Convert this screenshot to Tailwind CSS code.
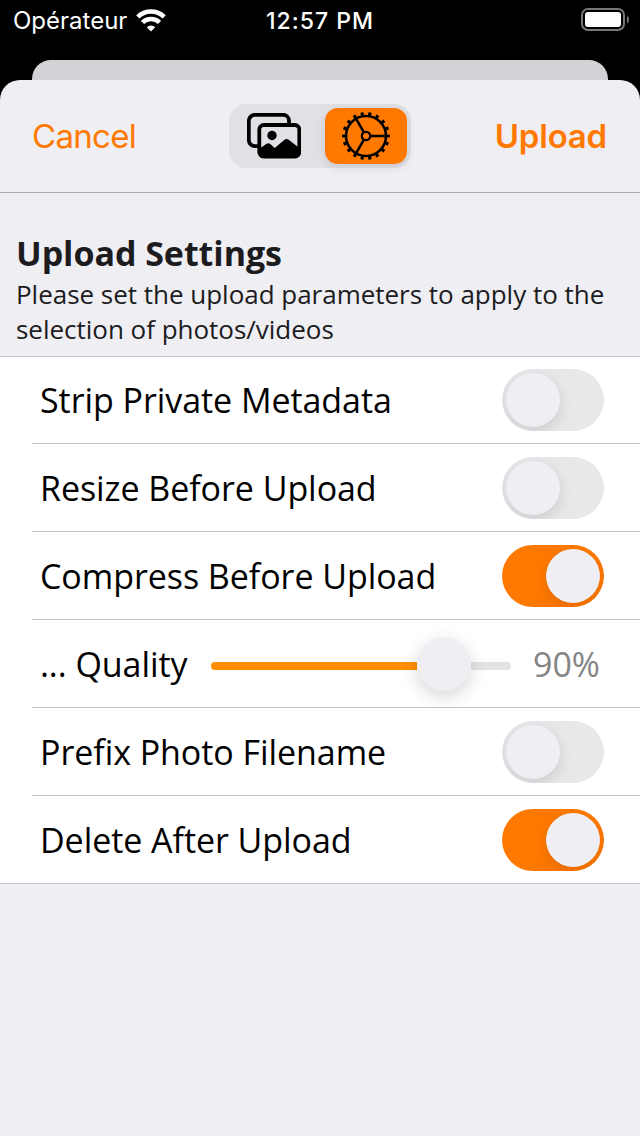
<!DOCTYPE html>
<html lang="en">
<head>
<meta charset="utf-8">
<title>Upload Settings</title>
<script src="https://cdn.jsdelivr.net/npm/@tailwindcss/browser@4"></script>
</head>
<body class="w-[640px] h-[1136px] overflow-hidden bg-black font-['Open_Sans',sans-serif]">
<div class="flex flex-col h-[1136px]">
  <header class="h-[60px] shrink-0 grid grid-cols-3 items-start text-white font-['Inter',sans-serif]">
    <div class="flex h-10 items-center pl-[13px]">
      <span class="pt-0.5 text-[24px] leading-10 whitespace-nowrap">Opérateur</span>
      <svg class="ml-[9px] shrink-0" width="30" height="23" viewBox="0 0 30 23" fill="none" stroke="#fff" stroke-width="4.6"><path d="M1.800 7.800a19 19 0 0 1 26.400 0"/><path d="M6.500 13.500a12 12 0 0 1 17 0"/><path d="M15 22.400l-4.200-4.200a6 6 0 0 1 8.400 0z" fill="#fff" stroke="none"/></svg>
    </div>
    <div class="pt-px text-center text-[23px] leading-10 font-medium tracking-[1px] whitespace-nowrap">12:57 PM</div>
    <div class="flex justify-end pt-[8px] pr-[11px]">
      <svg width="48" height="24" viewBox="0 0 48 24"><rect x="1" y="1" width="42" height="21" rx="6" fill="none" stroke="#777" stroke-width="2"/><rect x="4" y="4" width="36" height="15" rx="3" fill="#fff"/><path d="M46 7.5q2 1.5 2 4t-2 4z" fill="#777"/></svg>
    </div>
  </header>
  <div class="h-5 shrink-0 mx-8 rounded-t-[19px] bg-[#d3d2d7]"></div>
  <main class="flex-1 rounded-t-[20px] bg-[#efeef3] overflow-hidden">
    <nav class="h-[113px] border-b border-[#a9a9ad] flex justify-between pl-[33px] pr-[33px] pt-6 font-['Inter',sans-serif] text-[#ff7900]">
      <button class="h-16 w-[196px] pt-0.5 text-left text-[33px] tracking-[-0.7px] -indent-px">Cancel</button>
      <div class="h-16 w-[182px] rounded-[17px] bg-[#e1e0e5] p-1 flex justify-between text-black">
        <div class="w-[82px] flex items-center justify-center">
          <svg width="54" height="46" viewBox="0 0 54 46" fill="none"><path d="M12 33.2H8a6.2 6.2 0 0 1-6.2-6.200V8A6.200 6.200 0 0 1 8 1.800h28a6 6 0 0 1 6 6V10" stroke="currentColor" stroke-width="3.800"/><rect x="12.300" y="12" width="40" height="31.500" rx="4.500" stroke="currentColor" stroke-width="3.800"/><circle cx="25" cy="22.500" r="4.700" fill="currentColor"/><path d="M12 36l7.500-5.200q2-1.300 3.800.3l4.400 4 9.500-8.200q2.400-2 4.800 0L53 35.500V40q0 5-5 5H16q-4 0-4-4z" fill="currentColor"/></svg>
        </div>
        <div class="w-[82px] rounded-[13px] bg-[#ff7900] shadow-[0_3px_10px_rgba(0,0,0,0.12)] flex items-center justify-center">
          <svg width="50" height="50" viewBox="-25 -25 50 50" fill="none" stroke="currentColor"><circle r="20" stroke-width="2.600"/><circle r="22.200" stroke-width="3.400" pathLength="180" stroke-dasharray="4 6" stroke-dashoffset="2"/><circle r="4.200" stroke-width="2.300"/><path d="M5 0H20M-2.500-4.330L-10-17.300M-2.500 4.330L-10 17.300" stroke-width="2.500"/></svg>
        </div>
      </div>
      <button class="h-16 w-[196px] pt-0.5 text-right text-[33px] font-semibold tracking-[-0.2px]">Upload</button>
    </nav>
    <section>
      <div class="h-[163px] pl-4 pt-[37px] text-[#1c1c1e]">
        <h1 class="text-[34px] leading-[46px] mb-px font-bold tracking-[-0.05px] whitespace-nowrap">Upload Settings</h1>
        <p class="text-[26px] leading-[35px] tracking-[-0.02px] whitespace-nowrap">Please set the upload parameters to apply to the<br>selection of photos/videos</p>
      </div>
      <div class="h-[528px] border-y border-[#c6c6c8] bg-white pl-8 text-[34px] tracking-[-0.06px] text-black whitespace-nowrap">
        <div class="h-[87px] border-b border-[#c6c6c8] pl-2 pr-9 flex items-center justify-between">
          <span class="pt-px">Strip Private Metadata</span>
          <span class="w-[102px] h-[62px] rounded-full bg-[#e8e8ea] p-1 overflow-hidden"><span class="block size-[54px] rounded-full bg-[#efeef3] shadow-[0_5px_15px_rgba(0,0,0,0.12)]"></span></span>
        </div>
        <div class="h-[88px] border-b border-[#c6c6c8] pl-2 pr-9 flex items-center justify-between">
          <span class="pt-0.5">Resize Before Upload</span>
          <span class="w-[102px] h-[62px] rounded-full bg-[#e8e8ea] p-1 overflow-hidden"><span class="block size-[54px] rounded-full bg-[#efeef3] shadow-[0_5px_15px_rgba(0,0,0,0.12)]"></span></span>
        </div>
        <div class="h-[88px] border-b border-[#c6c6c8] pl-2 pr-9 flex items-center justify-between">
          <span class="pt-0.5">Compress Before Upload</span>
          <span class="w-[102px] h-[62px] rounded-full bg-[#ff7900] p-1 overflow-hidden flex justify-end"><span class="block size-[54px] rounded-full bg-[#efeef3] shadow-[0_5px_15px_rgba(0,0,0,0.12)]"></span></span>
        </div>
        <div class="h-[88px] border-b border-[#c6c6c8] pl-2 flex items-center">
          <span class="w-[171px] pt-0.5">... Quality</span>
          <div class="w-[300px] flex items-center">
            <span class="w-[206px] h-2 mt-1 rounded-l-full bg-[#ff8f00]"></span>
            <span class="size-[54px] shrink-0 rounded-full bg-[#efeef3] shadow-[0_6px_18px_rgba(0,0,0,0.16)] z-10"></span>
            <span class="w-10 h-2 mt-1 rounded-r-full bg-[#e3e3e5]"></span>
          </div>
          <span class="ml-[22px] pt-0.5 text-[#858585]">90%</span>
        </div>
        <div class="h-[88px] border-b border-[#c6c6c8] pl-2 pr-9 flex items-center justify-between">
          <span class="pt-0.5">Prefix Photo Filename</span>
          <span class="w-[102px] h-[62px] rounded-full bg-[#e8e8ea] p-1 overflow-hidden"><span class="block size-[54px] rounded-full bg-[#efeef3] shadow-[0_5px_15px_rgba(0,0,0,0.12)]"></span></span>
        </div>
        <div class="h-[87px] pl-2 pr-9 flex items-center justify-between">
          <span class="pt-0.5">Delete After Upload</span>
          <span class="w-[102px] h-[62px] rounded-full bg-[#ff7900] p-1 overflow-hidden flex justify-end"><span class="block size-[54px] rounded-full bg-[#efeef3] shadow-[0_5px_15px_rgba(0,0,0,0.12)]"></span></span>
        </div>
      </div>
    </section>
  </main>
</div>
</body>
</html>
